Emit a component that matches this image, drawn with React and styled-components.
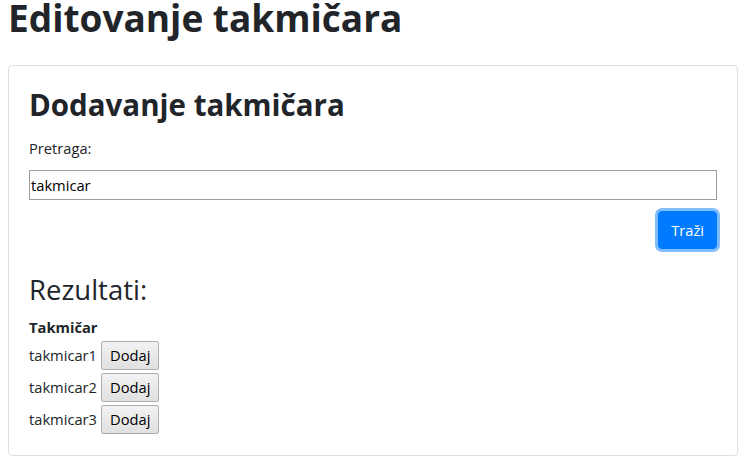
import React from "react";
import styled, { createGlobalStyle } from "styled-components";

const Global = createGlobalStyle`
  html, body { margin: 0; padding: 0; background: #fff; }
  body {
    font-family: "Open Sans", "Noto Sans", sans-serif;
    color: #212529;
    font-size: 14.7px;
  }
  * { box-sizing: border-box; }
`;

const Page = styled.div`
  padding: 0 16px 0 8px;
`;

const Title = styled.h1`
  margin: 0;
  font-size: 37px;
  line-height: 36px;
  font-weight: 700;
`;

const Card = styled.section`
  margin-top: 29px;
  border: 1px solid #dfdfdf;
  border-radius: 4px;
  padding: 20px;
`;

const CardTitle = styled.h2`
  margin: 0 0 12px;
  font-size: 29.5px;
  line-height: 38px;
  font-weight: 700;
`;

const Label = styled.label`
  display: block;
  line-height: 24px;
  margin-bottom: 10px;
`;

const SearchInput = styled.input`
  display: block;
  width: 100%;
  height: 30px;
  border: 1px solid #9d9d9d;
  padding: 1px 1px;
  font: inherit;
  color: #000;
  outline: none;
`;

const Actions = styled.div`
  display: flex;
  justify-content: flex-end;
  margin-top: 11px;
`;

const PrimaryButton = styled.button`
  font: inherit;
  line-height: 24px;
  padding: 6px 12px;
  border: 1px solid #007bff;
  border-radius: 4px;
  background: #007bff;
  color: #fff;
  box-shadow: 0 0 0 3px rgba(0, 123, 255, 0.5);
  cursor: pointer;
`;

const ResultsTitle = styled.h3`
  margin: 24px 0 8px;
  font-size: 27.5px;
  line-height: 34px;
  font-weight: 400;
`;

const HeaderCell = styled.div`
  font-weight: 700;
  line-height: 24px;
`;

const Row = styled.div`
  display: flex;
  align-items: center;
  gap: 4px;
  height: 32px;
`;

const AddButton = styled.button`
  font: inherit;
  color: #000;
  height: 29px;
  padding: 0 8px;
  border: 1px solid #adadad;
  border-radius: 2px;
  background: linear-gradient(#f2f2f2, #e1e1e1);
  cursor: pointer;
`;

const rows = ["takmicar1", "takmicar2", "takmicar3"];

export default function App() {
  return (
    <Page>
      <Global />
      <Title>Editovanje takmičara</Title>
      <Card>
        <CardTitle>Dodavanje takmičara</CardTitle>
        <Label htmlFor="search">Pretraga:</Label>
        <SearchInput id="search" defaultValue="takmicar" />
        <Actions>
          <PrimaryButton>Traži</PrimaryButton>
        </Actions>
        <ResultsTitle>Rezultati:</ResultsTitle>
        <HeaderCell>Takmičar</HeaderCell>
        {rows.map((r) => (
          <Row key={r}>
            <span>{r}</span>
            <AddButton>Dodaj</AddButton>
          </Row>
        ))}
      </Card>
    </Page>
  );
}
